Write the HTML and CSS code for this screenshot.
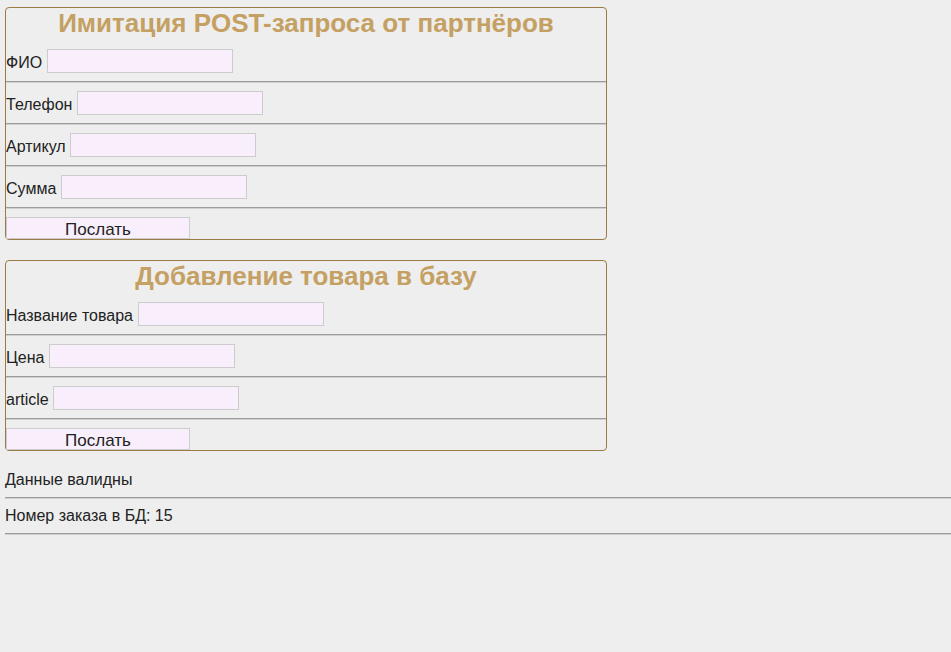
FILE: index.html
```html
<!DOCTYPE html>
<html lang="ru">
<head>
<meta charset="utf-8">
<title>Имитация POST-запроса</title>
<link rel="stylesheet" href="styles.css">
</head>
<body>
<form class="box">
  <div class="title">Имитация POST-запроса от партнёров</div>
  <div class="row"><label>ФИО</label><input class="field" type="text"></div>
  <hr class="sep">
  <div class="row"><label>Телефон</label><input class="field" type="text"></div>
  <hr class="sep">
  <div class="row"><label>Артикул</label><input class="field" type="text"></div>
  <hr class="sep">
  <div class="row"><label>Сумма</label><input class="field" type="text"></div>
  <hr class="sep">
  <button class="send" type="button">Послать</button>
</form>
<form class="box">
  <div class="title">Добавление товара в базу</div>
  <div class="row"><label>Название товара</label><input class="field" type="text"></div>
  <hr class="sep">
  <div class="row"><label>Цена</label><input class="field" type="text"></div>
  <hr class="sep">
  <div class="row"><label>article</label><input class="field" type="text"></div>
  <hr class="sep">
  <button class="send" type="button">Послать</button>
</form>
<div class="msg">Данные валидны</div>
<hr class="line">
<div class="msg">Номер заказа в БД: 15</div>
<hr class="line">
</body>
</html>
```
FILE: styles.css
```css
html, body {
  margin: 0;
  background: #eeeeee;
}
body {
  padding: 7px 0 0 5px;
  font-family: "Liberation Sans", Arial, sans-serif;
  font-size: 16px;
  color: #222222;
}
.box {
  width: 600px;
  border: 1px solid #9a7a45;
  border-radius: 4px;
  margin: 0 0 20px 0;
  display: flex;
  flex-direction: column;
  align-items: stretch;
}
.title {
  height: 41px;
  line-height: 30px;
  text-align: center;
  font-weight: bold;
  font-size: 26px;
  color: #c4a062;
}
.row {
  display: flex;
  align-items: center;
  gap: 4.5px;
  height: 24px;
}
.row label {
  line-height: 18px;
  padding-top: 4px;
}
.field {
  box-sizing: border-box;
  width: 186px;
  height: 24px;
  margin: 0;
  padding: 0 2px;
  background: #f8eefc;
  border: 1px solid #cccccc;
  font: inherit;
}
.sep {
  margin: 8px 0;
  height: 0;
  border: 0;
  border-top: 1px solid #9c9c9c;
  border-bottom: 1px solid #cfcfcf;
}
.send {
  box-sizing: border-box;
  align-self: flex-start;
  width: 184px;
  height: 22px;
  margin: 0;
  padding: 3px 0 0 0;
  background: #f8eefc;
  border: 1px solid #cccccc;
  font-family: "Liberation Sans", Arial, sans-serif;
  font-size: 17px;
  color: #222222;
  line-height: 18px;
}
.msg {
  line-height: 18px;
}
.line {
  margin: 8px 0;
  height: 0;
  border: 0;
  border-top: 1px solid #9c9c9c;
  border-bottom: 1px solid #cfcfcf;
}
```
